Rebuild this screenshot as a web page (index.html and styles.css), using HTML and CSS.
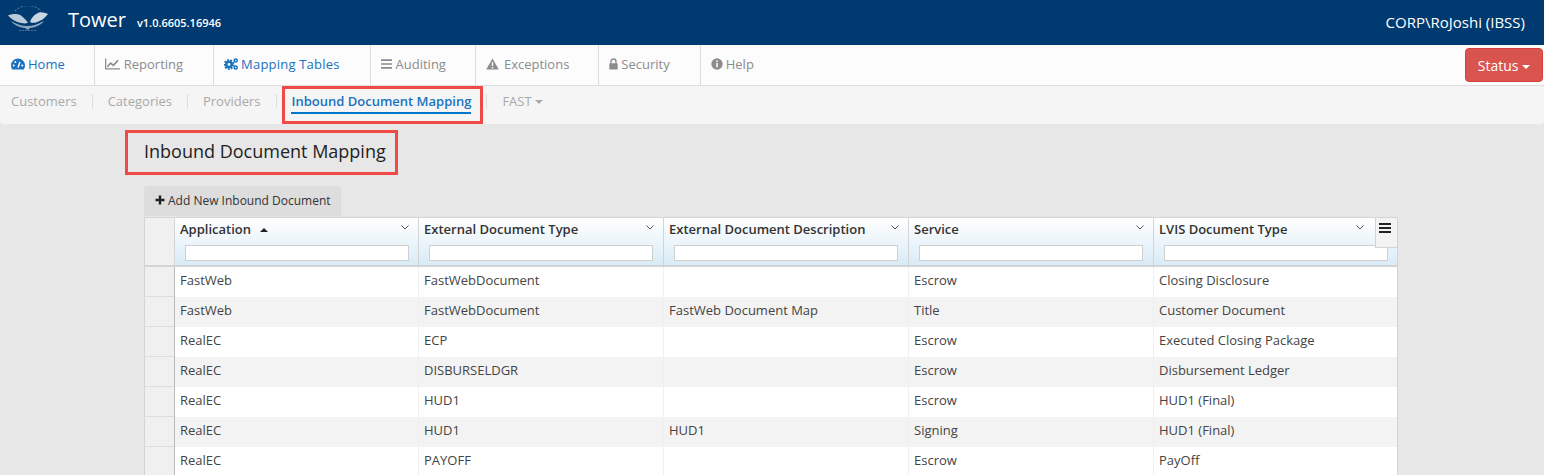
FILE: index.html
```html
<!DOCTYPE html>
<html lang="en">
<head>
    <meta charset="UTF-8">
    <meta name="viewport" content="width=device-width, initial-scale=1.0">
    <title>Tower</title>
    <link rel="stylesheet" href="styles.css">
</head>
<body>
    <header class="topbar">
        <svg class="logo" viewBox="0 0 40 26">
            <path d="M0 9.500c4-2 10-2 13 0 3 2 5 5 7 7-2 1.500-4 1-7 .5C8 16 3 13 0 9.500z" fill="#b9cadb"/>
            <path d="M40 8c-3-1-6-2-9-1.500-3 1-7 4-9 9.500 2 1 4 1 6 .5 5-1.500 9-4.500 12-8.500z" fill="#c9d7e4"/>
            <path d="M3 15c5 3 11 5 16 5 6 0 11-2 17-5-3 4-8 6.500-14 7l-2 2-3-2c-6-.5-11-3-14-7z" fill="#8ea7c0"/>
            <path d="M7 5 A17 15 0 0 1 33 5" fill="none" stroke="#4f7398" stroke-width="1.200" stroke-dasharray="2 1.500"/>
            <path d="M11 24.500h18" stroke="#4f7398" stroke-width="1" stroke-dasharray="2 1"/>
        </svg>
        <span class="brand">Tower</span>
        <span class="version">v1.0.6605.16946</span>
        <span class="user">CORP\RoJoshi (IBSS)</span>
    </header>

    <nav class="mainnav">
        <a class="navitem active nav-home" href="#">
            <svg class="ico ico-home" viewBox="0 0 14 12"><path d="M7 .5A7 7 0 0 0 0 7.500c0 1.500.5 2.900 1.300 4h11.400c.8-1.100 1.300-2.500 1.300-4A7 7 0 0 0 7 .5z" fill="currentColor"/><path d="M7 9.500l2-5.500" stroke="#fff" stroke-width="1.400"/><circle cx="2.700" cy="7.500" r="1" fill="#fff"/><circle cx="4.300" cy="3.900" r="1" fill="#fff"/><circle cx="11.300" cy="7.500" r="1" fill="#fff"/></svg>Home</a>
        <a class="navitem" href="#">
            <svg class="ico ico-wide" viewBox="0 0 16 12"><path d="M.7 0v11.300H16" fill="none" stroke="currentColor" stroke-width="1.300"/><path d="M2.500 9l3.500-4 3 2.500L14 2" fill="none" stroke="currentColor" stroke-width="1.800"/></svg>Reporting</a>
        <a class="navitem active nav-mapping" href="#">
            <svg class="ico ico-home" viewBox="0 0 14 12"><circle cx="5" cy="6.500" r="2.700" fill="none" stroke="currentColor" stroke-width="2.600"/><circle cx="5" cy="6.500" r="4.600" fill="none" stroke="currentColor" stroke-width="1.700" stroke-dasharray="1.800 1.400"/><circle cx="11.700" cy="2.500" r="1.500" fill="none" stroke="currentColor" stroke-width="1.500"/><circle cx="11.700" cy="9.500" r="1.500" fill="none" stroke="currentColor" stroke-width="1.500"/></svg>Mapping Tables</a>
        <a class="navitem nav-auditing" href="#">
            <svg class="ico ico-bars" viewBox="0 0 11 10"><path d="M0 1.200h11M0 5h11M0 8.800h11" stroke="currentColor" stroke-width="1.700"/></svg>Auditing</a>
        <a class="navitem nav-exceptions" href="#">
            <svg class="ico ico-warn" viewBox="0 0 13 12"><path d="M6.500.5l6.300 11H.2z" fill="currentColor"/><path d="M6.500 4v4M6.500 9v1.500" stroke="#fcfcfc" stroke-width="1.400"/></svg>Exceptions</a>
        <a class="navitem" href="#">
            <svg class="ico ico-lock" viewBox="0 0 9 12"><path d="M2 5.500V3.500a2.500 2.500 0 0 1 5 0v2" fill="none" stroke="currentColor" stroke-width="1.400"/><rect x=".3" y="5.200" width="8.400" height="6.300" rx=".8" fill="currentColor"/></svg>Security</a>
        <a class="navitem last" href="#">
            <svg class="ico ico-info" viewBox="0 0 12 12"><circle cx="6" cy="6" r="5.700" fill="currentColor"/><path d="M6 5v4.300M6 2.400v1.500" stroke="#fcfcfc" stroke-width="1.600"/></svg>Help</a>
        <button class="status">Status <span class="caret"></span></button>
    </nav>

    <nav class="subnav">
        <a class="subitem" href="#">Customers</a>
        <a class="subitem" href="#">Categories</a>
        <a class="subitem sub-providers" href="#">Providers</a>
        <a class="subitem current" href="#"><span>Inbound Document Mapping</span></a>
        <a class="subitem last" href="#">FAST <span class="caret"></span></a>
    </nav>

    <main class="content">
        <h1>Inbound Document Mapping</h1>
        <button class="addbtn"><svg class="plus" viewBox="0 0 10 10"><path d="M5 .5v9M.5 5h9" stroke="#222" stroke-width="2.400"/></svg>Add New Inbound Document</button>

        <div class="grid">
            <button class="gridmenu"><svg viewBox="0 0 12 10" width="12" height="10"><path d="M0 1h12M0 5h12M0 9h12" stroke="#222" stroke-width="1.800"/></svg></button>
            <table>
                <thead>
                    <tr>
                        <th class="sel"></th>
                        <th><div class="hd"><span>Application <i class="sort"></i></span><svg class="chev" viewBox="0 0 8 5"><path d="M.5.5L4 4 7.500.5" fill="none" stroke="#555"/></svg></div><input type="text"></th>
                        <th><div class="hd"><span>External Document Type</span><svg class="chev" viewBox="0 0 8 5"><path d="M.5.5L4 4 7.500.5" fill="none" stroke="#555"/></svg></div><input type="text"></th>
                        <th><div class="hd"><span>External Document Description</span><svg class="chev" viewBox="0 0 8 5"><path d="M.5.5L4 4 7.500.5" fill="none" stroke="#555"/></svg></div><input type="text"></th>
                        <th><div class="hd"><span>Service</span><svg class="chev" viewBox="0 0 8 5"><path d="M.5.5L4 4 7.500.5" fill="none" stroke="#555"/></svg></div><input type="text"></th>
                        <th><div class="hd"><span>LVIS Document Type</span><svg class="chev lastchev" viewBox="0 0 8 5"><path d="M.5.5L4 4 7.500.5" fill="none" stroke="#555"/></svg></div><input type="text"></th>
                    </tr>
                </thead>
                <tbody>
                    <tr><td class="sel"></td><td>FastWeb</td><td>FastWebDocument</td><td></td><td>Escrow</td><td>Closing Disclosure</td></tr>
                    <tr><td class="sel"></td><td>FastWeb</td><td>FastWebDocument</td><td>FastWeb Document Map</td><td>Title</td><td>Customer Document</td></tr>
                    <tr><td class="sel"></td><td>RealEC</td><td>ECP</td><td></td><td>Escrow</td><td>Executed Closing Package</td></tr>
                    <tr><td class="sel"></td><td>RealEC</td><td>DISBURSELDGR</td><td></td><td>Escrow</td><td>Disbursement Ledger</td></tr>
                    <tr><td class="sel"></td><td>RealEC</td><td>HUD1</td><td></td><td>Escrow</td><td>HUD1 (Final)</td></tr>
                    <tr><td class="sel"></td><td>RealEC</td><td>HUD1</td><td>HUD1</td><td>Signing</td><td>HUD1 (Final)</td></tr>
                    <tr><td class="sel"></td><td>RealEC</td><td>PAYOFF</td><td></td><td>Escrow</td><td>PayOff</td></tr>
                </tbody>
            </table>
        </div>
    </main>

    <div class="callout callout-tab"></div>
    <div class="callout callout-title"></div>
</body>
</html>
```

FILE: styles.css
```css
* {
    box-sizing: border-box;
}
html, body {
    height: 475px;
    overflow: hidden;
}
body {
    margin: 0;
    position: relative;
    font-family: "Open Sans", Arial, sans-serif;
    font-size: 13px;
    color: #333;
    background-color: #e7e7e7;
}
a {
    text-decoration: none;
}

.topbar {
    display: flex;
    align-items: center;
    height: 45px;
    padding: 0 19px 0 8px;
    background-color: #003a70;
    color: #fff;
}
.logo {
    flex: none;
    width: 40px;
    height: 26px;
    margin-top: -7px;
}
.brand {
    margin-left: 20px;
    margin-top: -6px;
    font-size: 20px;
}
.version {
    margin-left: 11px;
    font-size: 11px;
    font-weight: 600;
}
.user {
    margin-left: auto;
    margin-top: -1px;
    font-size: 15px;
}

.mainnav {
    display: flex;
    align-items: stretch;
    height: 41px;
    padding: 0 1px;
    background-color: #fcfcfc;
    border-bottom: 1px solid #ddd;
}
.navitem {
    display: flex;
    align-items: center;
    padding: 0 30px 2px 10px;
    color: #8c8c8c;
    border-left: 1px solid #ddd;
}
.navitem:first-child {
    border-left: 0;
}
.navitem.active {
    color: #1a72bf;
}
.nav-home {
    padding-right: 29px;
}
.nav-mapping {
    letter-spacing: .2px;
}
.nav-auditing {
    padding-right: 29px;
}
.nav-exceptions {
    padding-right: 29px;
}
.ico {
    flex: none;
    width: 13px;
    height: 12px;
    margin-right: 4px;
}
.ico-home {
    width: 14px;
    margin-right: 3px;
}
.ico-wide {
    width: 15px;
}
.ico-bars {
    width: 11px;
}
.ico-warn {
    margin-right: 5px;
}
.ico-lock {
    width: 9px;
    margin-right: 3px;
}
.ico-info {
    width: 12px;
    margin-right: 3px;
}
.status {
    margin: 3px 0 3px auto;
    width: 78px;
    padding: 0;
    font: inherit;
    font-size: 14px;
    color: #fff;
    background-color: #d9534f;
    border: 1px solid #d43f3a;
    border-radius: 4px;
}
.caret {
    display: inline-block;
    width: 0;
    height: 0;
    vertical-align: middle;
    border-top: 4px solid currentColor;
    border-left: 4px solid transparent;
    border-right: 4px solid transparent;
}

.subnav {
    display: flex;
    align-items: center;
    height: 38px;
    padding: 0 0 8px;
    background-color: #f5f5f5;
    border-radius: 0 0 4px 4px;
}
.subitem {
    padding: 0 15px;
    line-height: 15px;
    color: #a9a9a9;
    border-left: 1px solid #ddd;
}
.subitem:first-child {
    padding-left: 11px;
    border-left: 0;
}
.sub-providers {
    padding-right: 16px;
}
.subitem.current {
    padding-left: 14px;
    color: #1a72bf;
    font-weight: 600;
}
.subitem.current span {
    display: block;
    margin-bottom: -6px;
    padding-bottom: 3px;
    border-bottom: 2px solid #0277c8;
}

.content {
    padding: 0 144px;
}
h1 {
    margin: 0;
    padding-top: 17px;
    height: 62px;
    font-size: 18px;
    font-weight: 400;
    line-height: 21px;
    color: #222;
}
.addbtn {
    display: flex;
    align-items: center;
    width: 197px;
    height: 30px;
    padding: 0 0 2px 11px;
    font: inherit;
    font-size: 12px;
    color: #333;
    background-color: #ddd;
    border: 0;
    border-radius: 4px 4px 0 0;
}
.plus {
    width: 10px;
    height: 10px;
    margin-right: 3px;
}

.grid {
    position: relative;
    width: 1254px;
    margin-top: 1px;
}
table {
    width: 1254px;
    table-layout: fixed;
    border-collapse: separate;
    border-spacing: 0;
    background-color: #fff;
}
th, td {
    padding: 0 5px;
    text-align: left;
    vertical-align: top;
    border-left: 1px solid #d4d4d4;
}
th {
    height: 50px;
    padding-top: 3px;
    font-weight: 600;
    color: #333;
    background: linear-gradient(#fff, #d9ebf6);
    border-top: 1px solid #d4d4d4;
    border-bottom: 2px solid #d4d4d4;
}
th:nth-child(2) {
    width: 244px;
}
th:last-child, td:last-child {
    border-right: 1px solid #d4d4d4;
}
.sel {
    width: 30px;
    background: #f0f0f0;
    border-left: 1px solid #d4d4d4;
}
td {
    height: 30px;
    line-height: 26px;
    color: #444;
    border-left-color: #f0f0f0;
}
td.sel + td {
    border-left-color: #bbb;
}
tbody tr:nth-child(even) td {
    background-color: #f3f3f3;
}
tbody tr:nth-child(even) td.sel {
    background-color: #f0f0f0;
}
td.sel {
    border-left-color: #d4d4d4;
    border-bottom: 1px solid #ddd;
}
.hd {
    display: flex;
    justify-content: space-between;
    height: 17px;
    line-height: 16px;
}
.chev {
    width: 8px;
    height: 5px;
    margin: 4px 4px 0 0;
}
.lastchev {
    margin-right: 28px;
}
.sort {
    display: inline-block;
    margin-left: 6px;
    vertical-align: 2px;
    border-bottom: 4px solid #222;
    border-left: 4px solid transparent;
    border-right: 4px solid transparent;
}
th input {
    display: block;
    width: 224px;
    height: 16px;
    margin: 7px 0 0 5px;
    padding: 0;
    background-color: #fff;
    border: 1px solid #d0d0d0;
}
.gridmenu {
    position: absolute;
    top: 0;
    right: 0;
    z-index: 1;
    display: flex;
    align-items: flex-start;
    justify-content: center;
    width: 23px;
    height: 31px;
    padding: 5px 3px 0 0;
    background-color: #f3f3f3;
    border: 1px solid #d4d4d4;
}

.callout {
    position: absolute;
    border: 3px solid #ef4a45;
}
.callout-tab {
    left: 282px;
    top: 86px;
    width: 201px;
    height: 38px;
}
.callout-title {
    left: 125px;
    top: 130px;
    width: 273px;
    height: 45px;
}
```
